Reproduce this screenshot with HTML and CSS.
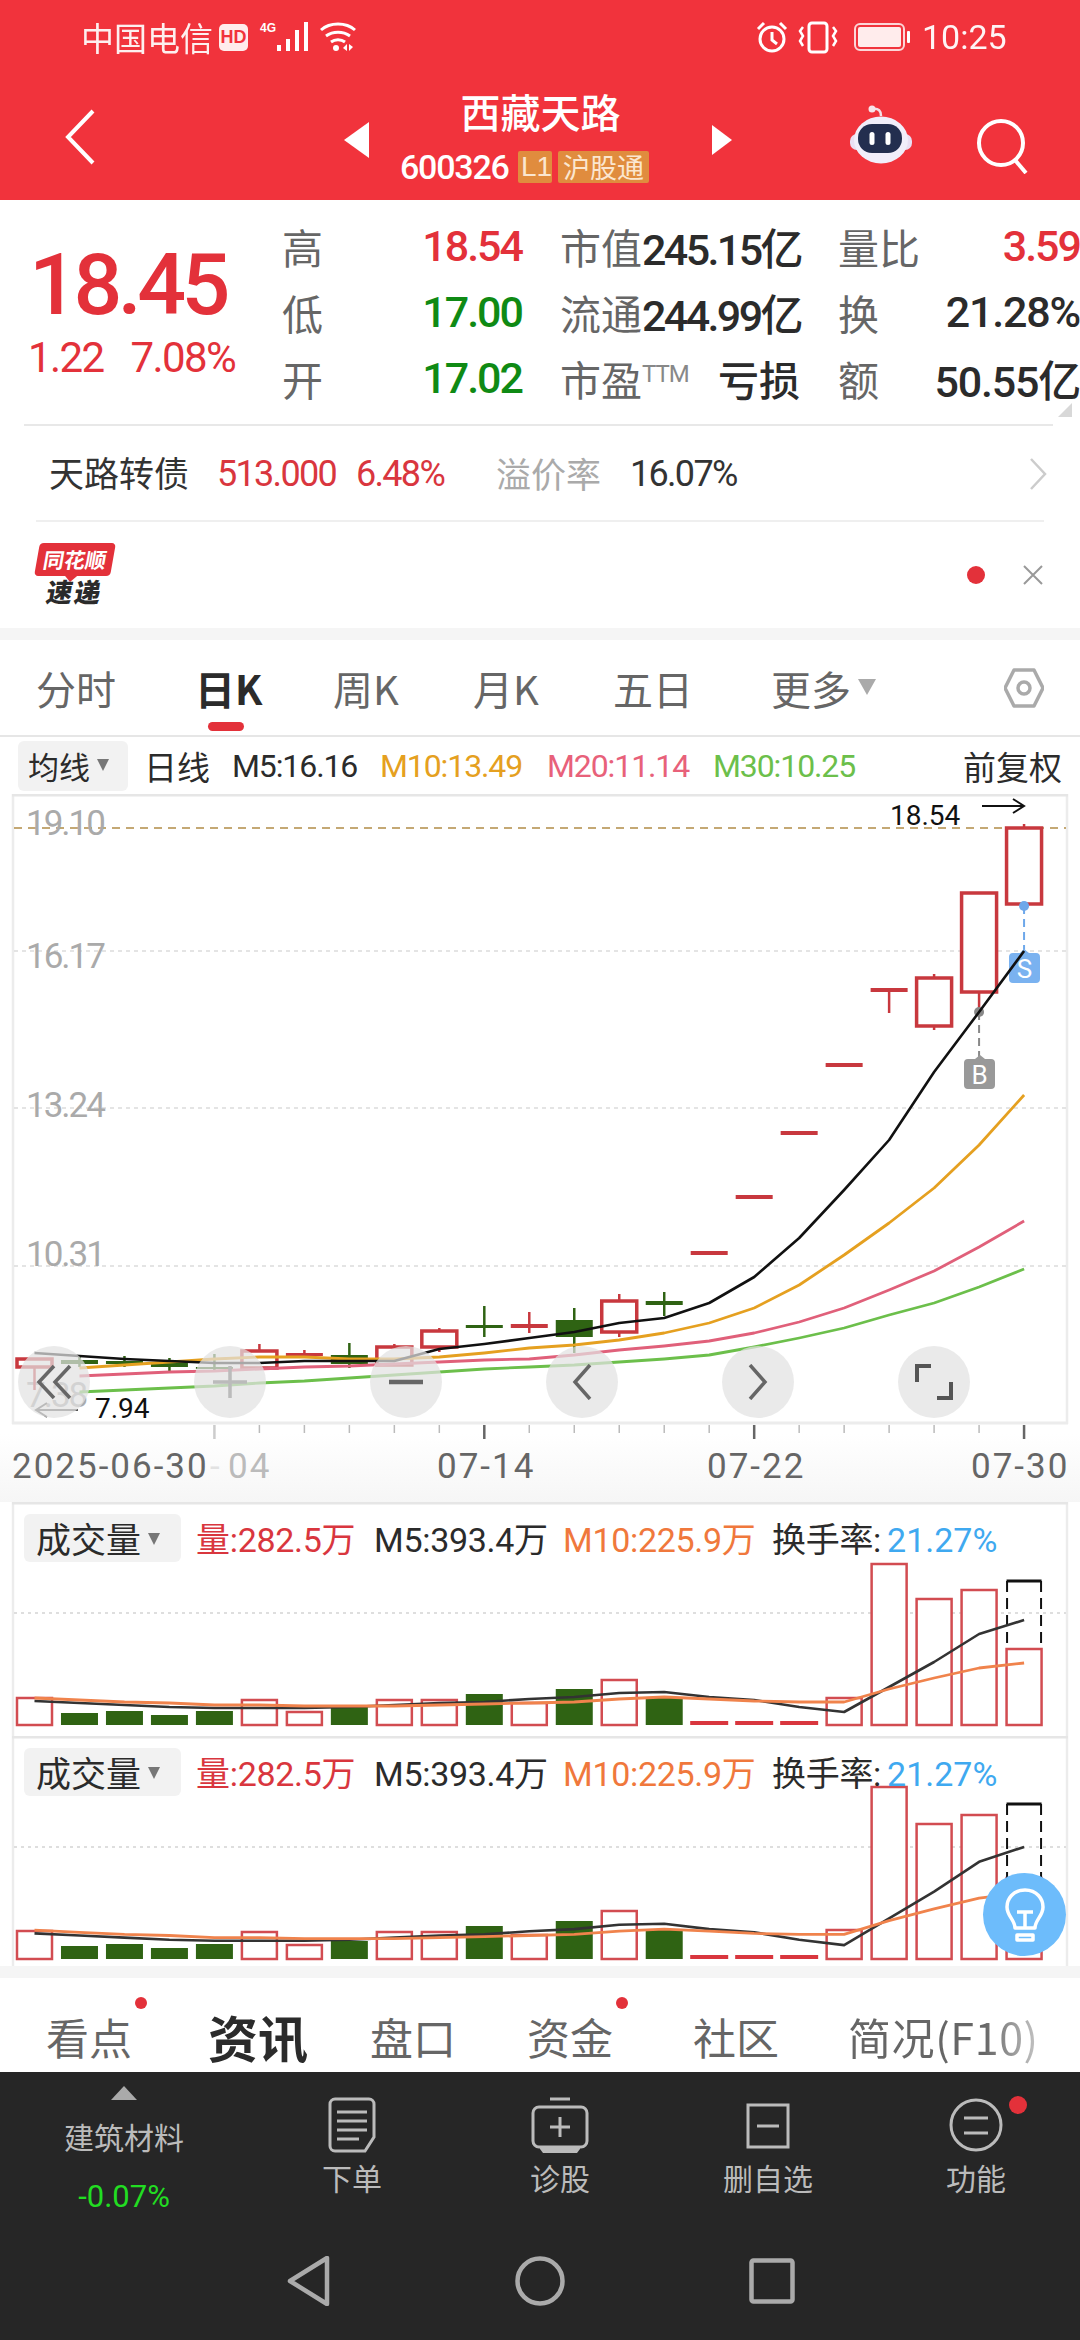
FILE: index.html
```html
<!DOCTYPE html>
<html lang="zh-CN">
<head>
    <meta charset="UTF-8">
    <meta name="viewport" content="width=device-width, initial-scale=1.0">
    <title>西藏天路</title>
    <link rel="stylesheet" href="styles.css">
</head>
<body>
<div class="page">
    <header class="top">
        <div class="status">
            <span class="carrier">中国电信</span>
            <span class="hd">HD</span>
            <span class="net">4G</span>
            <svg class="signal" width="32" height="30" viewBox="0 0 32 30"><g fill="#fff"><rect x="0" y="23" width="4" height="6"/><rect x="9" y="17" width="4" height="12"/><rect x="18" y="8" width="4" height="21"/><rect x="27" y="0" width="4" height="29"/></g></svg>
            <svg class="wifi" width="36" height="30" viewBox="0 0 36 30"><g fill="none" stroke="#fff" stroke-width="3"><path d="M1 8C10 0 26 0 35 8"/><path d="M6 14c7-5 17-5 24 0"/><path d="M11 20c4-3 10-3 14 0"/></g><circle cx="16" cy="26" r="3" fill="#fff"/><path d="M27 22v7l-4-3zM29 22v7l4-4z" fill="#fff"/></svg>
            <svg class="alarm" width="32" height="33" viewBox="0 0 32 33"><g fill="none" stroke="#fff" stroke-width="3"><circle cx="16" cy="18" r="12"/><path d="M16 11v8l5 4M2 8l6-6M30 8l-6-6"/></g></svg>
            <svg class="vibrate" width="42" height="33" viewBox="0 0 42 33"><g fill="none" stroke="#fff" stroke-width="3"><rect x="12" y="2" width="18" height="29" rx="3"/><path d="M6 6l-3 4 3 5-3 5 3 5M36 6l3 4-3 5 3 5-3 5" stroke-width="2.5"/></g></svg>
            <svg class="battery" width="57" height="28" viewBox="0 0 57 28"><rect x="1" y="1" width="49" height="26" rx="5" fill="none" stroke="#fff" stroke-width="2" opacity=".8"/><rect x="4" y="4" width="43" height="20" rx="2" fill="#ffecec"/><rect x="53" y="8" width="3" height="12" rx="1" fill="#fff"/></svg>
            <span class="clock">10:25</span>
        </div>
        <div class="nav">
            <svg class="back" width="34" height="56" viewBox="0 0 34 56"><path d="M30 2L5 28l25 26" fill="none" stroke="#fff" stroke-width="4"/></svg>
            <svg class="prev" width="25" height="36" viewBox="0 0 25 36"><path d="M25 0v36L0 18z" fill="#fff"/></svg>
            <div class="stock">
                <div class="stock-name">西藏天路</div>
                <div class="stock-sub">
                    <span class="stock-code num">600326</span>
                    <span class="tag tag-l1">L1</span>
                    <span class="tag">沪股通</span>
                </div>
            </div>
            <svg class="next" width="20" height="30" viewBox="0 0 20 30"><path d="M0 0v30l20-15z" fill="#fff"/></svg>
            <svg class="robot" width="64" height="60" viewBox="0 0 64 60"><path d="M23 5c7-1 9 2 9 7" fill="none" stroke="#f3dfe6" stroke-width="2.500"/><circle cx="23" cy="5" r="3.500" fill="#f7e4ea"/><rect x="1" y="30" width="62" height="16" rx="7" fill="#e9dff3"/><ellipse cx="32" cy="36" rx="27" ry="23.500" fill="#f1eefa"/><rect x="9" y="20" width="44" height="29" rx="14" fill="#232e4f"/><rect x="20.500" y="28" width="5" height="13" rx="2.500" fill="#fff"/><rect x="36.500" y="28" width="5" height="13" rx="2.500" fill="#fff"/></svg>
            <svg class="search" width="56" height="56" viewBox="0 0 56 56"><circle cx="26" cy="25" r="22" fill="none" stroke="#fff" stroke-width="4"/><path d="M40 42l11 13" stroke="#fff" stroke-width="4"/></svg>
        </div>
    </header>

    <section class="quote">
        <div class="quote-main">
            <div class="price-box">
                <div class="price num">18.45</div>
                <div class="price-change num"><span>1.22</span><span>7.08%</span></div>
            </div>
            <div class="stats">
                <div class="stat"><span class="label">高</span><span class="num up">18.54</span></div>
                <div class="stat"><span class="label">市值</span><span class="num tight">245.15亿</span></div>
                <div class="stat"><span class="label">量比</span><span class="num up">3.59</span></div>
                <div class="stat"><span class="label">低</span><span class="num down">17.00</span></div>
                <div class="stat"><span class="label">流通</span><span class="num tight">244.99亿</span></div>
                <div class="stat"><span class="label">换</span><span class="num loose">21.28%</span></div>
                <div class="stat"><span class="label">开</span><span class="num down">17.02</span></div>
                <div class="stat"><span class="label">市盈<sup class="ttm">TTM</sup></span><span class="strong">亏损</span></div>
                <div class="stat"><span class="label">额</span><span class="num loose">50.55亿</span></div>
            </div>
            <div class="corner"></div>
        </div>
        <div class="bond">
            <span class="bond-name">天路转债</span>
            <span class="num bond-price">513.000</span>
            <span class="num bond-pct">6.48%</span>
            <span class="bond-label">溢价率</span>
            <span class="num bond-rate">16.07%</span>
            <svg class="bond-arrow" width="18" height="32" viewBox="0 0 18 32"><path d="M2 1l14 15L2 31" fill="none" stroke="#ccc" stroke-width="2.5"/></svg>
        </div>
        <div class="news">
            <div class="logo">
                <span class="logo-top">同花顺</span>
                <span class="logo-bottom">速递</span>
            </div>
            <span class="news-dot"></span>
            <svg class="news-close" width="20" height="20" viewBox="0 0 20 20"><path d="M1 1l18 18M19 1L1 19" stroke="#999" stroke-width="2"/></svg>
        </div>
    </section>
    <div class="band"></div>

    <section class="market">
        <nav class="periods">
            <span>分时</span>
            <span class="active">日K</span>
            <span>周K</span>
            <span>月K</span>
            <span>五日</span>
            <span class="more">更多<i class="caret caret-big"></i></span>
            <svg class="hex" width="40" height="42" viewBox="0 0 40 42"><path d="M10 3h20l9 18-9 18H10L1 21z" fill="none" stroke="#aaa" stroke-width="3.500" stroke-linejoin="round"/><circle cx="20" cy="21" r="6" fill="none" stroke="#aaa" stroke-width="3.500"/></svg>
        </nav>
        <div class="ma-row">
            <span class="pick">均线<i class="caret"></i></span>
            <span>日线</span>
            <span class="num">M5:16.16</span>
            <span class="num c-m10">M10:13.49</span>
            <span class="num c-m20">M20:11.14</span>
            <span class="num c-m30">M30:10.25</span>
            <span class="adjust">前复权</span>
        </div>
        <div class="kchart">
            <svg id="kline" width="1080" height="708" viewBox="0 794 1080 708"></svg>
            <div class="tools">
                <span class="tool"><svg width="38" height="36" viewBox="0 0 38 36"><path d="M19 2L4 18l15 16M35 2L20 18l15 16" fill="none" stroke="#666" stroke-width="3.500"/></svg></span>
                <span class="tool"><svg width="34" height="32" viewBox="0 0 34 32"><path d="M0 16h34M17 0v32" fill="none" stroke="#bbb" stroke-width="3.500"/></svg></span>
                <span class="tool"><svg width="34" height="8" viewBox="0 0 34 8"><path d="M0 4h34" stroke="#666" stroke-width="4.500"/></svg></span>
                <span class="tool"><svg width="20" height="36" viewBox="0 0 20 36"><path d="M18 1L3 18l15 17" fill="none" stroke="#666" stroke-width="3.500"/></svg></span>
                <span class="tool"><svg width="20" height="36" viewBox="0 0 20 36"><path d="M2 1l15 17L2 35" fill="none" stroke="#666" stroke-width="3.500"/></svg></span>
                <span class="tool"><svg width="38" height="36" viewBox="0 0 38 36"><path d="M2 18V2h14M36 18v16H22" fill="none" stroke="#555" stroke-width="4"/></svg></span>
            </div>
        </div>
        <div class="vol-panel panel-a">
            <svg id="vol1" width="1080" height="234" viewBox="0 1502 1080 234"></svg>
            <div class="vol-head">
                <span class="pick pick-vol">成交量<i class="caret"></i></span>
                <span class="num c-red">量:282.5万</span>
                <span class="num">M5:393.4万</span>
                <span class="num c-orange">M10:225.9万</span>
                <span class="num">换手率:<span class="c-blue">21.27%</span></span>
            </div>
        </div>
        <div class="vol-panel panel-b">
            <svg id="vol2" width="1080" height="230" viewBox="0 1736 1080 230"></svg>
            <div class="vol-head">
                <span class="pick pick-vol">成交量<i class="caret"></i></span>
                <span class="num c-red">量:282.5万</span>
                <span class="num">M5:393.4万</span>
                <span class="num c-orange">M10:225.9万</span>
                <span class="num">换手率:<span class="c-blue">21.27%</span></span>
            </div>
            <div class="bulb">
                <svg width="42" height="54" viewBox="0 0 42 54"><g fill="none" stroke="#fff" stroke-width="3.500" stroke-linejoin="round"><path d="M21 2C9 2 3 11 3 19c0 9 8 13 8 21h20c0-8 8-12 8-21C39 11 33 2 21 2z"/><path d="M13 24h16M21 24v16M13 47h16v5H13z"/></g></svg>
            </div>
        </div>
    </section>
    <div class="band"></div>

    <nav class="info-tabs">
        <span>看点<i class="red-dot"></i></span>
        <span class="active">资讯</span>
        <span>盘口</span>
        <span>资金<i class="red-dot"></i></span>
        <span>社区</span>
        <span class="f10">简况(F10)</span>
    </nav>

    <footer class="dock">
        <div class="dock-row">
            <div class="sector">
                <i class="sector-up"></i>
                <span class="sector-name">建筑材料</span>
                <span class="sector-pct num">-0.07%</span>
            </div>
            <div class="dock-item">
                <svg width="48" height="56" viewBox="0 0 48 56"><g fill="none" stroke="#bbb" stroke-width="3"><path d="M7 2h34a5 5 0 0 1 5 5v33l-9 14H7a5 5 0 0 1-5-5V7a5 5 0 0 1 5-5z"/><path d="M9 15h30M9 24h30M9 33h30M9 42h22"/></g></svg>
                <span>下单</span>
            </div>
            <div class="dock-item">
                <svg width="58" height="56" viewBox="0 0 58 56"><g fill="none" stroke="#bbb" stroke-width="3"><path d="M19 2h20"/><rect x="2" y="10" width="54" height="40" rx="6"/><path d="M29 20v20M19 30h20"/></g><path d="M9 50h40v2l-3 4H12l-3-4z" fill="#bbb"/></svg>
                <span>诊股</span>
            </div>
            <div class="dock-item">
                <svg width="44" height="56" viewBox="0 0 44 56"><rect x="2" y="8" width="40" height="42" fill="none" stroke="#bbb" stroke-width="3"/><path d="M11 29h22" stroke="#bbb" stroke-width="3"/></svg>
                <span>删自选</span>
            </div>
            <div class="dock-item">
                <svg width="54" height="56" viewBox="0 0 54 56"><circle cx="27" cy="28" r="25" fill="none" stroke="#bbb" stroke-width="3"/><path d="M15 21h24M15 36h24" stroke="#bbb" stroke-width="3"/></svg>
                <span>功能</span>
                <i class="dock-dot"></i>
            </div>
        </div>
        <div class="softkeys">
            <svg width="44" height="50" viewBox="0 0 44 50"><path d="M40 2v46L3 25z" fill="none" stroke="#aaa" stroke-width="4.500" stroke-linejoin="round"/></svg>
            <svg width="50" height="50" viewBox="0 0 50 50"><circle cx="25" cy="25" r="22.500" fill="none" stroke="#aaa" stroke-width="4.500"/></svg>
            <svg width="46" height="46" viewBox="0 0 46 46"><rect x="2.500" y="2.500" width="41" height="41" rx="2" fill="none" stroke="#aaa" stroke-width="4.500"/></svg>
        </div>
    </footer>
</div>
<script src="chart.js"></script>
</body>
</html>
```
FILE: styles.css
```css
* {
    box-sizing: border-box;
}
html, body {
    margin: 0;
    padding: 0;
}
body {
    font-family: "Noto Sans CJK SC", "Liberation Sans", sans-serif;
    color: #333;
    background: #fff;
}
i {
    font-style: normal;
}
svg {
    display: block;
}
.page {
    width: 1080px;
    height: 2340px;
    overflow: hidden;
    display: flex;
    flex-direction: column;
}
.num {
    font-family: Roboto, "Noto Sans CJK SC", sans-serif;
}

/* red header */
.top {
    height: 200px;
    background: #f1333c;
    color: #fff;
}
.status {
    height: 74px;
    display: flex;
    align-items: center;
    padding-left: 81px;
}
.carrier {
    font-size: 33px;
    width: 138px;
    white-space: nowrap;
    opacity: .92;
}
.hd {
    width: 29px;
    height: 27px;
    background: #ffecec;
    color: #f1333c;
    border-radius: 5px;
    font: bold 18px "Liberation Sans", sans-serif;
    text-align: center;
    line-height: 27px;
}
.net {
    width: 17px;
    margin-left: 12px;
    margin-top: -18px;
    font: bold 12px "Liberation Sans", sans-serif;
}
.wifi {
    margin-left: 11px;
}
.alarm {
    margin-left: 400px;
}
.vibrate {
    margin-left: 9px;
}
.battery {
    margin-left: 15px;
}
.clock {
    font-family: Roboto, sans-serif;
    font-size: 34px;
    margin-left: 11px;
    opacity: .95;
}
.nav {
    height: 126px;
    display: flex;
    align-items: center;
    padding-left: 63px;
}
.prev {
    margin-left: 247px;
    margin-top: 6px;
}
.stock {
    width: 343px;
    text-align: center;
}
.stock-name {
    font-size: 40px;
    font-weight: 500;
    line-height: 50px;
    margin-top: -4px;
}
.stock-sub {
    display: flex;
    align-items: center;
    padding-left: 31px;
    height: 34px;
    margin-top: 14px;
}
.stock-code {
    font-size: 34px;
    font-weight: 500;
    letter-spacing: -1.2px;
    width: 118px;
    text-align: left;
}
.tag {
    background: #e08c3e;
    color: #fbe6cf;
    font-size: 27px;
    line-height: 32px;
    height: 32px;
    padding: 0 5px;
    border-radius: 2px;
    margin-left: 6px;
    white-space: nowrap;
}
.tag-l1 {
    margin-left: 0;
    font-family: "Liberation Sans", sans-serif;
    font-size: 28px;
    width: 34px;
    padding: 0 3px;
}
.next {
    margin-top: 6px;
}
.robot {
    margin-left: 117px;
    margin-top: -6px;
}
.search {
    margin-left: 62px;
    margin-top: 18px;
}

/* quote block */
.quote {
    height: 428px;
}
.quote-main {
    height: 226px;
    position: relative;
    display: flex;
    padding-left: 28px;
}
.quote-main::after {
    content: "";
    position: absolute;
    left: 24px;
    right: 27px;
    bottom: 0;
    height: 2px;
    background: #e8e8e8;
}
.price-box {
    width: 254px;
    color: #e3313a;
}
.price {
    font-size: 86px;
    line-height: 96px;
    margin-top: 37px;
    padding-left: 1px;
    font-weight: 500;
    letter-spacing: -4.5px;
}
.price-change {
    display: flex;
    gap: 27px;
    font-size: 42px;
    letter-spacing: -1.6px;
    line-height: 50px;
}
.stats {
    width: 798px;
    padding-top: 13px;
    display: grid;
    grid-template-columns: 240px 240px 242px;
    column-gap: 38px;
    grid-auto-rows: 66px;
}
.stat {
    display: flex;
    justify-content: space-between;
    align-items: center;
    font-size: 43px;
    font-weight: 500;
    letter-spacing: -2px;
    color: #2b2b2b;
    white-space: nowrap;
}
.stat .tight {
    letter-spacing: -2.6px;
}
.stat .loose {
    letter-spacing: -1.2px;
}
.label {
    font-size: 41px;
    font-weight: 400;
    letter-spacing: 0;
    font-family: "Noto Sans CJK SC", sans-serif;
    color: #666;
}
.ttm {
    font-family: Roboto, sans-serif;
    font-size: 24px;
    letter-spacing: -1px;
    color: #888;
    vertical-align: 14px;
    line-height: 0;
}
.strong {
    font-size: 41px;
    font-weight: 500;
    letter-spacing: 0;
}
.up {
    color: #e3313a;
}
.down {
    color: #0f8a14;
}
.corner {
    position: absolute;
    right: 8px;
    bottom: 9px;
    width: 0;
    height: 0;
    border-left: 14px solid transparent;
    border-bottom: 14px solid #d8d8d8;
}
.bond {
    height: 96px;
    position: relative;
    display: flex;
    align-items: center;
    padding-left: 49px;
    white-space: nowrap;
}
.bond::after {
    content: "";
    position: absolute;
    left: 36px;
    right: 36px;
    bottom: 0;
    height: 2px;
    background: #efefef;
}
.bond-name {
    font-size: 35px;
    width: 168px;
    margin-top: -5px;
}
.bond-price,
.bond-pct,
.bond-rate {
    font-size: 36px;
    letter-spacing: -1.7px;
}
.bond-price {
    color: #d9363e;
    width: 139px;
}
.bond-pct {
    color: #d9363e;
    width: 140px;
}
.bond-label {
    font-size: 35px;
    color: #aaa;
    width: 134px;
    margin-top: -4px;
}
.bond-arrow {
    margin-left: auto;
    margin-right: 33px;
}
.news {
    height: 106px;
    display: flex;
    align-items: center;
    padding-left: 37px;
}
.logo {
    width: 76px;
    display: flex;
    flex-direction: column;
    align-items: center;
    margin-top: -2px;
}
.logo-top {
    width: 76px;
    height: 33px;
    background: #e3313a;
    color: #fff;
    border-radius: 4px;
    font-size: 21px;
    font-weight: bold;
    line-height: 33px;
    text-align: center;
    transform: skewX(-10deg);
    white-space: nowrap;
    position: relative;
}
.logo-top::after {
    content: "";
    position: absolute;
    left: 31px;
    top: 33px;
    border-left: 6px solid transparent;
    border-right: 6px solid transparent;
    border-top: 6px solid #e3313a;
}
.logo-bottom {
    font-size: 26px;
    line-height: 30px;
    font-weight: 900;
    letter-spacing: 2px;
    color: #2b2b2b;
    transform: skewX(-10deg);
}
.news-dot {
    width: 18px;
    height: 18px;
    background: #e3313a;
    border-radius: 50%;
    margin-left: 854px;
}
.news-close {
    margin-left: 38px;
}
.band {
    height: 12px;
    background: #f5f5f5;
    flex: none;
}

/* chart area */
.market {
    height: 1326px;
    flex: none;
}
.periods {
    height: 97px;
    display: grid;
    grid-template-columns: 159px 138px 140px 140px 158px 233px auto;
    align-items: center;
    padding-left: 36px;
    border-bottom: 2px solid #e6e6e6;
    font-size: 40px;
    color: #666;
}
.periods .active {
    color: #2b2b2b;
    font-weight: bold;
    position: relative;
}
.periods .active::after {
    content: "";
    position: absolute;
    left: 13px;
    top: 63px;
    width: 36px;
    height: 9px;
    border-radius: 5px;
    background: #e3313a;
}
.caret {
    display: inline-block;
    width: 0;
    height: 0;
    border-left: 6px solid transparent;
    border-right: 6px solid transparent;
    border-top: 12px solid #777;
    margin-left: 7px;
    vertical-align: 8px;
}
.caret-big {
    border-left-width: 9px;
    border-right-width: 9px;
    border-top: 16px solid #aaa;
    vertical-align: 10px;
}
.ma-row {
    height: 57px;
    display: grid;
    grid-template-columns: 126px 88px 148px 167px 166px 250px auto;
    align-items: center;
    padding-left: 18px;
    font-size: 33px;
    color: #2b2b2b;
    white-space: nowrap;
}
.ma-row .num {
    font-size: 32px;
    letter-spacing: -1.1px;
}
.pick {
    height: 50px;
    width: 110px;
    background: #f2f2f2;
    border-radius: 6px;
    font-size: 31px;
    line-height: 50px;
    padding-left: 10px;
    white-space: nowrap;
}
.c-m10 {
    color: #e5a020;
}
.c-m20 {
    color: #e8617a;
}
.c-m30 {
    color: #6cbf4b;
}
.c-red {
    color: #d9363e;
}
.c-orange {
    color: #f0783c;
}
.c-blue {
    color: #3fa9f0;
}
.kchart {
    height: 708px;
    position: relative;
    background: linear-gradient(#fff 640px, #f6f6f6 708px);
}
.axis-price {
    font-family: Roboto, sans-serif;
    font-size: 35px;
    letter-spacing: -2px;
    fill: #aaa;
}
.axis-mark {
    font-family: Roboto, sans-serif;
    font-size: 28px;
    fill: #111;
}
.axis-date {
    font-family: Roboto, sans-serif;
    font-size: 35px;
    fill: #666;
    letter-spacing: 2px;
}
.axis-fade {
    fill: #bbb;
}
.axis-ghost {
    fill: #e2e2e2;
}
.badge-text {
    font-family: Roboto, sans-serif;
    font-size: 26px;
    fill: #fff;
    text-anchor: middle;
}
.tools {
    position: absolute;
    left: 18px;
    top: 552px;
    display: flex;
    gap: 104px;
}
.tool {
    width: 72px;
    height: 72px;
    border-radius: 50%;
    background: rgba(226, 226, 226, .72);
    display: flex;
    align-items: center;
    justify-content: center;
}
.vol-panel {
    display: grid;
    position: relative;
    background: #fff;
}
.vol-panel > * {
    grid-area: 1 / 1;
}
.panel-a {
    height: 234px;
}
.panel-b {
    height: 230px;
}
.vol-head {
    display: grid;
    grid-template-columns: 172px 178px 189px 209px auto;
    align-items: center;
    padding-left: 24px;
    height: 48px;
    margin-top: 11px;
    font-size: 34px;
    color: #2b2b2b;
    white-space: nowrap;
}
.vol-head .num {
    font-size: 34px;
    letter-spacing: -.3px;
}
.vol-head .c-blue {
    margin-left: 6px;
    letter-spacing: 0;
}
.pick-vol {
    width: 157px;
    height: 48px;
    font-size: 35px;
    line-height: 48px;
    padding-left: 12px;
}
.bulb {
    position: absolute;
    left: 983px;
    top: 137px;
    width: 83px;
    height: 83px;
    border-radius: 50%;
    background: #6dbcfb;
    display: flex;
    align-items: center;
    justify-content: center;
}

/* lower tabs */
.info-tabs {
    height: 94px;
    flex: none;
    display: grid;
    grid-template-columns: 162px 162px 157px 166px 155px auto;
    align-items: center;
    padding: 22px 0 0 46px;
    font-size: 43px;
    color: #666;
    white-space: nowrap;
}
.info-tabs span {
    position: relative;
}
.info-tabs .active {
    font-size: 50px;
    font-weight: bold;
    color: #2b2b2b;
}
.red-dot {
    position: absolute;
    left: 89px;
    top: -8px;
    width: 12px;
    height: 12px;
    border-radius: 50%;
    background: #e3313a;
}
.f10 {
    background: linear-gradient(90deg, #666 70%, #ccc);
    -webkit-background-clip: text;
    background-clip: text;
    color: transparent !important;
    width: 194px;
    letter-spacing: .6px;
}

/* dark dock */
.dock {
    flex: 1;
    background: #262626;
    color: #bbb;
}
.dock-row {
    height: 170px;
    display: grid;
    grid-template-columns: 248px repeat(4, 208px);
}
.sector {
    display: flex;
    flex-direction: column;
    align-items: center;
    padding-top: 14px;
}
.sector-up {
    width: 0;
    height: 0;
    border-left: 13px solid transparent;
    border-right: 13px solid transparent;
    border-bottom: 14px solid #aaa;
}
.sector-name {
    font-size: 30px;
    line-height: 44px;
    margin-top: 14px;
}
.sector-pct {
    font-size: 31px;
    color: #22dd22;
    line-height: 44px;
    margin-top: 17px;
}
.dock-item {
    display: flex;
    flex-direction: column;
    align-items: center;
    padding-top: 25px;
    font-size: 30px;
    position: relative;
}
.dock-item span {
    line-height: 44px;
    margin-top: 2px;
}
.dock-dot {
    position: absolute;
    left: 137px;
    top: 24px;
    width: 18px;
    height: 18px;
    border-radius: 50%;
    background: #e3313a;
}
.softkeys {
    display: flex;
    align-items: center;
    padding-left: 287px;
    gap: 184px;
    margin-top: 14px;
}
```
FILE: chart.js
```js
const RED = '#c8383e';
const GREEN = '#2f6313';
const VOL_RED = '#d24c51';
const xi = i => 34.5 + 44.98 * i;

// [kind, body top, body bottom, wick top, wick bottom]
const candles = [
    ['r', 1359, 1367, 1359, 1390], ['g', 1360, 1364, 1355, 1367], ['g', 1361, 1364, 1356, 1367],
    ['g', 1362, 1367, 1358, 1371], ['g', 1367, 1369, 1354, 1372], ['r', 1351, 1368, 1344, 1368],
    ['s', 1353, 1356, 1350, 1358], ['g', 1355, 1364, 1343, 1368], ['r', 1347, 1365, 1344, 1365],
    ['r', 1331, 1347, 1328, 1352], ['g', 1325, 1328, 1306, 1337], ['s', 1324, 1328, 1312, 1333],
    ['g', 1320, 1337, 1308, 1353], ['r', 1301, 1332, 1294, 1337], ['g', 1301, 1305, 1292, 1316],
    ['s', 1251, 1255, 1251, 1255], ['s', 1195, 1199, 1195, 1199], ['s', 1131, 1135, 1131, 1135],
    ['s', 1063, 1067, 1063, 1067], ['s', 988, 992, 988, 1013], ['r', 978, 1026, 974, 1030],
    ['r', 893, 992, 893, 1012], ['r', 828, 904, 824, 904]
];
const m5 = [1353, 1356, 1359, 1361, 1363, 1363, 1361, 1361, 1361, 1349, 1344, 1338, 1332, 1323, 1318, 1303, 1277, 1238, 1190, 1140, 1072, 1012, 951];
const m10 = [null, 1368, 1365, 1362, 1359, 1357, 1357, 1359, 1359, 1357, 1353, 1348, 1345, 1340, 1333, 1323, 1308, 1285, 1255, 1223, 1188, 1145, 1095];
const m20 = [null, 1376, 1374, 1372, 1371, 1369, 1367, 1366, 1364, 1362, 1360, 1359, 1355, 1350, 1346, 1341, 1333, 1322, 1308, 1290, 1271, 1247, 1221];
const m30 = [null, 1392, 1390, 1388, 1386, 1383, 1381, 1378, 1375, 1372, 1369, 1367, 1365, 1362, 1359, 1355, 1347, 1338, 1328, 1315, 1303, 1287, 1269];

function line(ys, color, width, map) {
    const pts = [];
    ys.forEach((y, i) => {
        if (y !== null) pts.push(xi(i).toFixed(1) + ',' + (map ? map(y) : y).toFixed(1));
    });
    return '<polyline points="' + pts.join(' ') + '" fill="none" stroke="' + color + '" stroke-width="' + width + '" stroke-linejoin="round"/>';
}

function seg(x1, y1, x2, y2, color, width, dash) {
    return '<line x1="' + x1 + '" y1="' + y1 + '" x2="' + x2 + '" y2="' + y2 + '" stroke="' + color + '" stroke-width="' + width + '"' + (dash ? ' stroke-dasharray="' + dash + '"' : '') + '/>';
}

function frame(top, bottom) {
    return seg(13, top, 13, bottom, '#ececec', 2.5) + seg(1067, top, 1067, bottom, '#ececec', 2.5) + seg(12, top + 1, 1068, top + 1, '#e6e6e6', 3);
}

function drawKline() {
    let s = frame(794, 1424) + seg(12, 1423, 1068, 1423, '#ececec', 3);
    [951, 1108, 1266].forEach(y => { s += seg(14, y, 1066, y, '#dcdcdc', 1.5, '4 4'); });
    s += seg(14, 828, 1066, 828, '#c4a874', 2, '8 6');

    [['19.10', 835], ['16.17', 968], ['13.24', 1117], ['10.31', 1266], ['7.38', 1407]].forEach(l => {
        s += '<text class="axis-price" x="26" y="' + l[1] + '">' + l[0] + '</text>';
    });

    candles.forEach((c, i) => {
        const x = xi(i);
        const color = c[0] === 'g' ? GREEN : RED;
        if (c[3] < c[1] || c[4] > c[2]) s += seg(x, c[3], x, c[4], color, 2.5);
        if (c[0] === 'r') {
            s += '<rect x="' + (x - 17.5) + '" y="' + c[1] + '" width="35" height="' + (c[2] - c[1]) + '" fill="#fff" stroke="' + color + '" stroke-width="3.5"/>';
        } else {
            s += '<rect x="' + (x - 18.5) + '" y="' + c[1] + '" width="37" height="' + (c[2] - c[1]) + '" fill="' + color + '"/>';
        }
    });

    // buy and sell markers
    s += seg(xi(21), 1012, xi(21), 1058, '#888', 2, '8 5') + '<circle cx="' + xi(21) + '" cy="1012" r="5" fill="#888"/>';
    s += '<path d="M964 1063q0-4 4-4h7l5-4 5 4h6q4 0 4 4v22q0 4-4 4h-23q-4 0-4-4z" fill="#999"/><text class="badge-text" x="979.500" y="1084">B</text>';
    s += seg(xi(22), 906, xi(22), 950, '#6ea8ea', 2, '8 5') + '<circle cx="' + xi(22) + '" cy="906" r="5" fill="#6ea8ea"/>';
    s += '<path d="M1009 957q0-4 4-4h7l4-4 5 4h7q4 0 4 4v22q0 4-4 4h-23q-4 0-4-4z" fill="#7ab2f0"/><text class="badge-text" x="1024.500" y="978">S</text>';

    s += line(m30, '#6cbf4b', 2.8) + line(m20, '#e0607a', 2.8) + line(m10, '#e5a020', 2.8) + line(m5, '#111', 2.6);

    s += '<text class="axis-mark" x="890" y="825">18.54</text>';
    s += '<path d="M982 806h42m-11-7l11 7-11 7" fill="none" stroke="#111" stroke-width="2"/>';
    s += '<text class="axis-mark" x="95" y="1418">7.94</text>';
    s += '<path d="M78 1410H36m11-7l-11 7 11 7" fill="none" stroke="#555" stroke-width="2"/>';

    for (let i = 4; i < 23; i++) {
        const major = (i - 4) % 6 === 0;
        s += seg(xi(i), 1425, xi(i), major ? 1439 : 1433, major ? (i === 4 ? '#ccc' : '#666') : '#bbb', major ? 2.5 : 1.5);
    }
    [['2025-06-30', 12, ''], ['-', 210, ' axis-ghost'], ['04', 228, ' axis-fade'], ['07-14', 437, ''], ['07-22', 707, ''], ['07-30', 971, '']].forEach(d => {
        s += '<text class="axis-date' + d[2] + '" x="' + d[1] + '" y="1478">' + d[0] + '</text>';
    });
    document.getElementById('kline').innerHTML = s;
}

const volM5 = [1701, 1703, 1705, 1707, 1708, 1708, 1708, 1707, 1705, 1703, 1702, 1699, 1697, 1693, 1692, 1697, 1700, 1707, 1712, 1687, 1662, 1634, 1620];
const volM10 = [1698, 1700, 1702, 1703, 1705, 1705, 1706, 1706, 1706, 1705, 1704, 1703, 1702, 1699, 1697, 1699, 1701, 1702, 1702, 1689, 1678, 1668, 1663];

function drawVol(id, top, frameBottom, base, grid, bars, dashTop, k) {
    let s = frame(top, frameBottom) + seg(14, grid, 1066, grid, '#dedede', 2, '3 4');
    const kinds = 'rggggrrgrrgrgrgsssrrrrr';
    bars.forEach((y, i) => {
        const x = xi(i);
        if (kinds[i] === 'g') {
            s += '<rect x="' + (x - 18.5) + '" y="' + y + '" width="37" height="' + (base - y) + '" fill="' + GREEN + '"/>';
        } else if (kinds[i] === 's') {
            s += '<rect x="' + (x - 19) + '" y="' + (y - 1) + '" width="38" height="' + (base - y + 1) + '" fill="#d9363e"/>';
        } else {
            s += '<rect x="' + (x - 17.5) + '" y="' + y + '" width="35" height="' + (base - y) + '" fill="#fff" stroke="' + VOL_RED + '" stroke-width="2.5"/>';
        }
    });
    const x = xi(22);
    s += seg(x - 17, dashTop, x - 17, bars[22], '#111', 2, '11 6') + seg(x + 17, dashTop, x + 17, bars[22], '#111', 2, '11 6');
    s += seg(x - 17.5, dashTop, x + 17.5, dashTop, '#111', 3);
    const map = y => base - (1725 - y) * k;
    s += line(volM5, '#333', 2.6, map) + line(volM10, '#f0834c', 2.8, map);
    document.getElementById(id).innerHTML = s;
}

drawKline();
drawVol('vol1', 1502, 1736, 1725, 1613,
    [1698, 1713, 1711, 1715, 1711, 1700, 1712, 1707, 1700, 1700, 1694, 1703, 1689, 1680, 1697, 1722, 1722, 1722, 1698, 1564, 1599, 1590, 1649], 1581, 1);
drawVol('vol2', 1736, 1966, 1959, 1847,
    [1931, 1946, 1944, 1948, 1944, 1932, 1945, 1941, 1932, 1932, 1926, 1935, 1921, 1911, 1930, 1956, 1956, 1956, 1930, 1787, 1824, 1815, 1878], 1804, 1.068);
```
